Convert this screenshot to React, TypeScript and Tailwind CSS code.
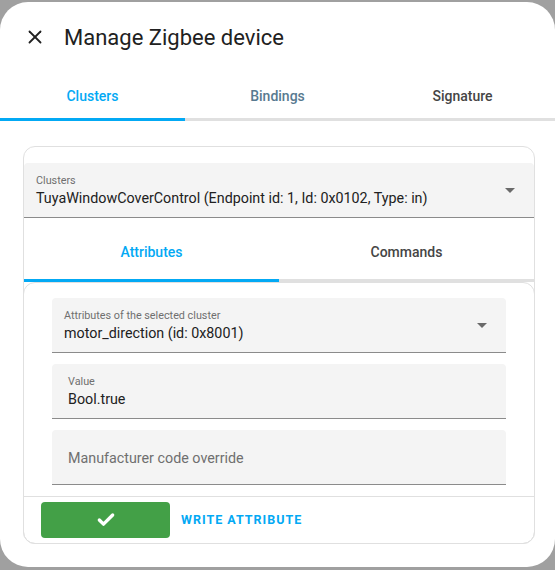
import { X, Check } from 'lucide-react'

function Field({ label, value, select, pl }: { label?: string; value?: string; select?: boolean; pl: string }) {
  return (
    <div className={`relative h-[55px] rounded-t-[4px] bg-[#f4f4f4] border-b border-[#8b8b8b] ${pl} flex flex-col justify-center pt-[2px]`}>
      {label && <div className='text-[10.8px] leading-[14px] text-[#6f6f6f]'>{label}</div>}
      {value && <div className='text-[14.3px] leading-[20px] text-[#212121]'>{value}</div>}
      {!label && <div className='text-[14.3px] leading-[20px] text-[#6f6f6f]'>Manufacturer code override</div>}
      {select && (
        <div className='absolute right-[19px] top-[25px] w-0 h-0 border-l-[5px] border-r-[5px] border-t-[5px] border-l-transparent border-r-transparent border-t-[#6a6a6a]'></div>
      )}
    </div>
  )
}

export default function App() {
  return (
    <div className="h-[570px] w-[555px] bg-[#a0a0a0] pt-[2px] font-['Roboto',sans-serif] overflow-hidden">
      <div className="h-[565px] bg-white rounded-[28px] flex flex-col">
        <div className='h-[70px] flex items-center'>
          <div className='w-[64px] pl-[24px]'>
            <X size={22} strokeWidth={2} className='text-[#212121]' />
          </div>
          <h1 className='text-[22px] text-[#212121]'>Manage Zigbee device</h1>
        </div>

        <div className='flex text-[14px] font-medium'>
          <div className='flex-1 flex flex-col'>
            <div className='h-[46px] pt-[2px] flex items-center justify-center text-[#03a9f4]'>Clusters</div>
            <div className='h-[3px] bg-[#03a9f4]'></div>
          </div>
          <div className='flex-1 flex flex-col'>
            <div className='h-[46px] pt-[2px] flex items-center justify-center text-[#587a90]'>Bindings</div>
            <div className='h-[3px] bg-[#e0e0e0]'></div>
          </div>
          <div className='flex-1 flex flex-col'>
            <div className='h-[46px] pt-[2px] flex items-center justify-center text-[#454545]'>Signature</div>
            <div className='h-[3px] bg-[#e0e0e0]'></div>
          </div>
        </div>

        <div className='ml-[23px] mr-[20px] mt-[25px] border border-[#e0e0e0] rounded-[12px] pt-[16px]'>
          <Field label='Clusters' value='TuyaWindowCoverControl (Endpoint id: 1, Id: 0x0102, Type: in)' select pl='pl-[12px]' />

          <div className='flex text-[14px] font-medium'>
            <div className='flex-1 flex flex-col'>
              <div className='h-[61px] pt-[7px] flex items-center justify-center text-[#03a9f4]'>Attributes</div>
              <div className='h-[3px] bg-[#03a9f4]'></div>
            </div>
            <div className='flex-1 flex flex-col'>
              <div className='h-[61px] pt-[7px] flex items-center justify-center text-[#454545]'>Commands</div>
              <div className='h-[3px] bg-[#e0e0e0]'></div>
            </div>
          </div>

          <div className='border border-[#e0e0e0] rounded-[12px] -mx-px -mb-px'>
            <div className='px-[28px] pt-[15px] pb-[11px] flex flex-col gap-[11px]'>
              <Field label='Attributes of the selected cluster' value='motor_direction (id: 0x8001)' select pl='pl-[12px]' />
              <Field label='Value' value='Bool.true' pl='pl-[16px]' />
              <Field pl='pl-[16px]' />
            </div>
            <div className='border-t border-[#e0e0e0] flex items-center gap-[11px] pl-[17px] pt-[5px] pb-[5px]'>
              <button className='w-[129px] h-[36px] bg-[#43a047] rounded-[4px] flex items-center justify-center'>
                <Check size={20} strokeWidth={4} className='text-white' />
              </button>
              <span className='text-[12.5px] font-bold tracking-[1px] text-[#03a9f4]'>WRITE ATTRIBUTE</span>
            </div>
          </div>
        </div>
      </div>
    </div>
  )
}
